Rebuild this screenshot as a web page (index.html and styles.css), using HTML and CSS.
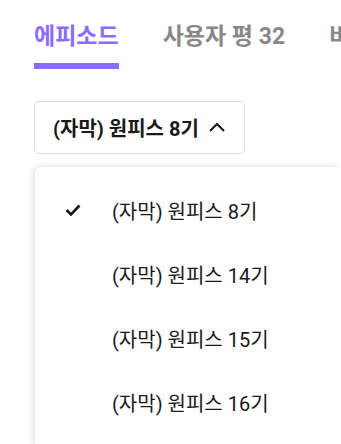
FILE: index.html
```html
<!DOCTYPE html>
<html lang="ko">
<head>
    <meta charset="UTF-8">
    <meta name="viewport" content="width=device-width, initial-scale=1.0">
    <title>에피소드</title>
    <link rel="stylesheet" href="styles.css">
</head>
<body>
    <div class="page">
        <nav class="tabs">
            <a class="tab active">에피소드</a>
            <a class="tab">사용자 평 32</a>
            <a class="tab">비슷한 작품</a>
        </nav>

        <div class="season">
            <button class="season-button">
                <span>(자막) 원피스 8기</span>
                <svg class="chevron" width="18" height="12" viewBox="0 0 18 12">
                    <path d="M2 10 L9 3 L16 10" fill="none" stroke="#1a1a1a" stroke-width="2.2"/>
                </svg>
            </button>
        </div>

        <ul class="season-menu">
            <li class="season-item selected">
                <svg class="check" width="16" height="12" viewBox="0 0 16 12">
                    <path d="M1.5 6 L6 10.5 L14.5 1.5" fill="none" stroke="#1a1a1a" stroke-width="2.6"/>
                </svg>
                <span>(자막) 원피스 8기</span>
            </li>
            <li class="season-item"><span>(자막) 원피스 14기</span></li>
            <li class="season-item"><span>(자막) 원피스 15기</span></li>
            <li class="season-item"><span>(자막) 원피스 16기</span></li>
        </ul>
    </div>
</body>
</html>
```

FILE: styles.css
```css
body {
    margin: 0;
    padding: 0;
    background-color: #fff;
    color: #1a1a1a;
    font-family: Roboto, "Noto Sans CJK KR", sans-serif;
    overflow: hidden;
}

.page {
    display: flex;
    flex-direction: column;
    height: 444px;
    padding-left: 34px;
    overflow: hidden;
}

.tabs {
    display: flex;
    gap: 44px;
    padding-top: 18px;
    white-space: nowrap;
    overflow: hidden;
}

.tab {
    font-size: 23px;
    font-weight: 700;
    color: #888;
    line-height: 38px;
    padding-bottom: 7px;
    border-bottom: 6px solid transparent;
}

.tab.active {
    color: #8b6cff;
    border-bottom-color: #8b6cff;
}

.season {
    margin-top: 32px;
}

.season-button {
    display: flex;
    align-items: center;
    gap: 9px;
    height: 53px;
    padding: 0 18px;
    background: #fff;
    border: 1px solid #ddd;
    border-radius: 5px;
    font-family: inherit;
    font-size: 20px;
    font-weight: 700;
    color: #1a1a1a;
}

.chevron {
    margin-top: -2px;
}

.season-menu {
    flex: 1;
    list-style: none;
    margin: 13px 0 0 1px;
    padding: 11px 0 0 0;
    background: #fff;
    border-radius: 6px 0 0 0;
    box-shadow: -2px 0 6px rgba(0, 0, 0, 0.12);
}

.season-item {
    display: flex;
    align-items: center;
    height: 64px;
    padding-left: 77px;
    font-size: 20px;
    position: relative;
}

.check {
    position: absolute;
    left: 30px;
    top: 26px;
}
```
